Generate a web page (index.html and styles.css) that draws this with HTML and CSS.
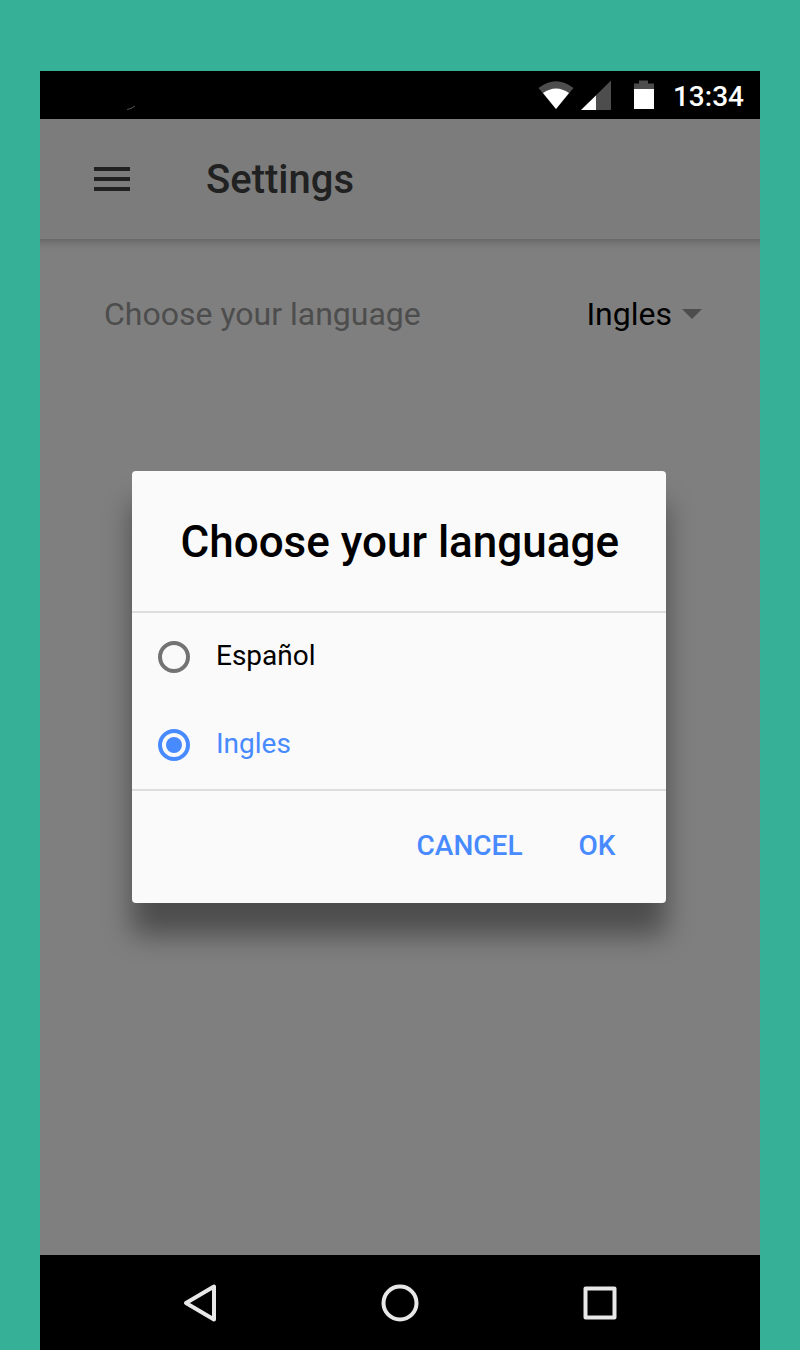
FILE: index.html
```html
<!DOCTYPE html>
<html lang="en">
<head>
<meta charset="utf-8">
<title>Settings</title>
<link rel="stylesheet" href="styles.css">
</head>
<body>
<div class="phone">
  <div class="status-bar">
    <svg class="status-mark" width="16" height="8" viewBox="0 0 16 8" fill="none" stroke="#555" stroke-width="1"><path d="M3 6.500Q7 6 11 3"/></svg>
    <svg class="status-icons" width="120" height="48" viewBox="0 0 120 48">
      <path d="M3.500 17Q21 3.500 38.500 17L21 38Z" fill="#4d4d4d"/>
      <path d="M8 22Q21 13 34 22L21 38Z" fill="#fff"/>
      <path d="M46 39L76 9.500V39Z" fill="#4d4d4d"/>
      <path d="M46 39L61 24.500V39Z" fill="#fff"/>
      <path d="M99 18V12.500H104V9.500H113V12.500H119V18Z" fill="#4d4d4d"/>
      <path d="M99 18H119V38H99Z" fill="#fff"/>
    </svg>
    <span class="clock">13:34</span>
  </div>
  <header class="app-bar">
    <svg class="menu-icon" width="36" height="24" viewBox="0 0 36 24"><path d="M0 0H36V4H0ZM0 10H36V14H0ZM0 20H36V24H0Z" fill="#212121"/></svg>
    <h1 class="app-title">Settings</h1>
  </header>
  <main class="content">
    <div class="setting">
      <span class="setting-label">Choose your language</span>
      <span class="setting-value">Ingles</span>
      <span class="caret"></span>
    </div>
    <section class="dialog">
      <h2 class="dialog-title">Choose your language</h2>
      <div class="options">
        <div class="option"><span class="radio"></span><span class="option-label">Español</span></div>
        <div class="option selected"><span class="radio"></span><span class="option-label">Ingles</span></div>
      </div>
      <div class="actions"><span>CANCEL</span><span>OK</span></div>
    </section>
  </main>
  <nav class="nav-bar">
    <svg width="480" height="95" viewBox="0 0 480 95" fill="none" stroke="#e8e8e8" stroke-width="4" stroke-linejoin="round">
      <path d="M54 31.500V64.500L26 48Z"/>
      <circle cx="240" cy="48" r="16.500"/>
      <rect x="425.500" y="33.500" width="29" height="29"/>
    </svg>
  </nav>
</div>
</body>
</html>
```
FILE: styles.css
```css
* { box-sizing: border-box; }
body { margin: 0; height: 1350px; padding: 71px 40px 0; background: #36b197; font-family: Roboto, sans-serif; overflow: hidden; }
h1, h2 { margin: 0; font-weight: 500; white-space: nowrap; }
.phone { height: 1279px; display: flex; flex-direction: column; background: #7f7f7f; }
.status-bar { height: 48px; flex: none; background: #000; display: flex; justify-content: flex-end; align-items: center; padding-right: 16px; gap: 18px; color: #fff; }
.status-mark { margin: 24px auto 0 84px; }
.clock { font-size: 28px; font-weight: 500; line-height: 48px; padding-top: 4px; }
.app-bar { height: 120px; flex: none; display: flex; align-items: center; padding-left: 54px; gap: 76px; background: #7c7c7c; }
.app-title { font-size: 40px; color: #212121; }
.content { flex: 1; padding: 55px 58px 0 64px; background: linear-gradient(#696969, #747474 4px, #7c7c7c 8px, #7f7f7f 11px) #7f7f7f; }
.setting { display: flex; align-items: center; height: 40px; font-size: 32px; color: #000; }
.setting-label { flex: 1; color: #4d4d4d; }
.caret { margin-left: 10px; border: 10px solid transparent; border-top-color: #4d4d4d; border-bottom: 0; }
.dialog { width: 534px; height: 432px; margin: 137px 0 0 28px; background: #fafafa; border-radius: 4px; box-shadow: 0 32px 28px rgba(0,0,0,.4); }
.dialog-title { height: 140px; padding-left: 48.5px; font-size: 44px; line-height: 142px; }
.options { height: 180px; border-top: 2px solid #ddd; border-bottom: 2px solid #ddd; font-size: 28px; }
.option { height: 88px; display: flex; align-items: center; padding-left: 26px; gap: 26px; }
.option-label { padding-bottom: 4px; }
.radio { width: 32px; height: 32px; border: 4px solid #737373; border-radius: 50%; }
.selected { color: #488aff; }
.selected .radio { border-color: #488aff; background: #488aff; background-clip: content-box; padding: 4px; }
.actions { display: flex; justify-content: flex-end; padding: 38px 50.5px 0 0; gap: 56px; font-size: 28px; font-weight: 500; color: #488aff; }
.nav-bar { height: 95px; flex: none; background: #000; display: flex; justify-content: center; }
```
